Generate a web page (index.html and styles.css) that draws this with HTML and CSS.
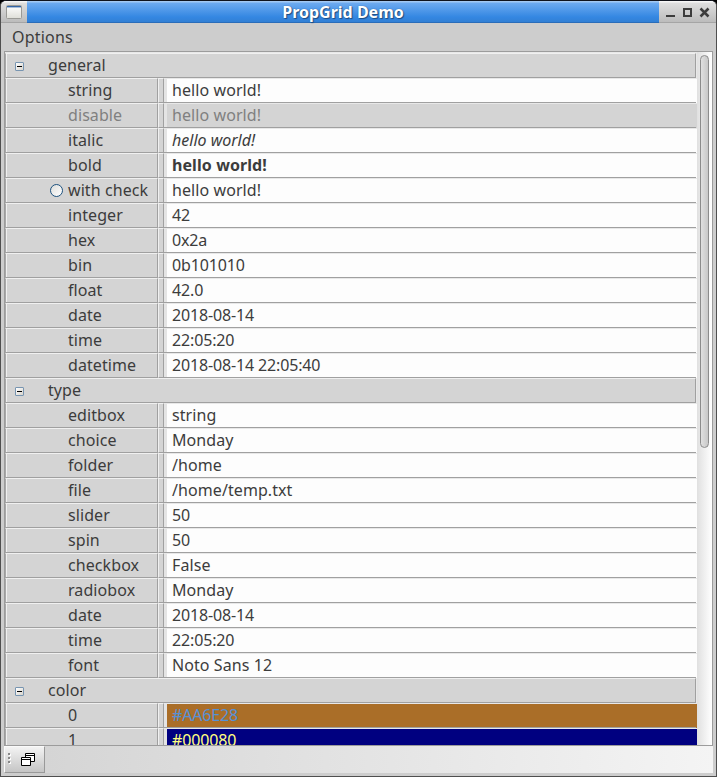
FILE: index.html
```
<!DOCTYPE html>
<html lang="en">
<head>
<meta charset="utf-8">
<title>PropGrid Demo</title>
<link rel="stylesheet" href="styles.css">
</head>
<body>
<div class="window">
  <header class="titlebar">
    <div class="app-button"><svg width="16" height="15" viewBox="0 0 16 15"><defs><linearGradient id="pane" x2="0" y2="1"><stop stop-color="#fff"/><stop offset="1" stop-color="#deded8"/></linearGradient></defs><rect x=".5" y=".5" width="15" height="13" rx="1" fill="url(#pane)" stroke="#9a9a96"/><path d="M1 1.500h14" stroke="#3465a4"/><path d="M1 2.500h14" stroke="#a9bfdb"/></svg></div>
    <h1 class="title">PropGrid Demo</h1>
    <div class="controls"><svg width="58" height="22" viewBox="0 0 58 22" fill="none" stroke="#3c3c3c" stroke-width="2"><path d="M7 15h9"/><path d="M25 8h7v7h-7z"/><path d="M41.500 7.500l8 8M49.500 7.500l-8 8" stroke-width="2.500"/></svg></div>
  </header>
  <nav class="menubar">Options</nav>
  <main class="panel">
    <div class="grid">
      <div class="group"><i class="toggle"></i><span>general</span></div>
      <div class="row"><div class="name">string</div><div class="split"></div><div class="value">hello world!</div></div>
      <div class="row disabled"><div class="name">disable</div><div class="split"></div><div class="value">hello world!</div></div>
      <div class="row"><div class="name">italic</div><div class="split"></div><div class="value italic">hello world!</div></div>
      <div class="row"><div class="name">bold</div><div class="split"></div><div class="value bold">hello world!</div></div>
      <div class="row"><div class="name checkable"><i class="radio"></i>with check</div><div class="split"></div><div class="value">hello world!</div></div>
      <div class="row"><div class="name">integer</div><div class="split"></div><div class="value number">42</div></div>
      <div class="row"><div class="name">hex</div><div class="split"></div><div class="value number">0x2a</div></div>
      <div class="row"><div class="name">bin</div><div class="split"></div><div class="value number">0b101010</div></div>
      <div class="row"><div class="name">float</div><div class="split"></div><div class="value number">42.0</div></div>
      <div class="row"><div class="name">date</div><div class="split"></div><div class="value number">2018-08-14</div></div>
      <div class="row"><div class="name">time</div><div class="split"></div><div class="value number">22:05:20</div></div>
      <div class="row"><div class="name">datetime</div><div class="split"></div><div class="value number">2018-08-14 22:05:40</div></div>
      <div class="group"><i class="toggle"></i><span>type</span></div>
      <div class="row"><div class="name">editbox</div><div class="split"></div><div class="value">string</div></div>
      <div class="row"><div class="name">choice</div><div class="split"></div><div class="value">Monday</div></div>
      <div class="row"><div class="name">folder</div><div class="split"></div><div class="value">/home</div></div>
      <div class="row"><div class="name">file</div><div class="split"></div><div class="value">/home/temp.txt</div></div>
      <div class="row"><div class="name">slider</div><div class="split"></div><div class="value number">50</div></div>
      <div class="row"><div class="name">spin</div><div class="split"></div><div class="value number">50</div></div>
      <div class="row"><div class="name">checkbox</div><div class="split"></div><div class="value">False</div></div>
      <div class="row"><div class="name">radiobox</div><div class="split"></div><div class="value">Monday</div></div>
      <div class="row"><div class="name">date</div><div class="split"></div><div class="value number">2018-08-14</div></div>
      <div class="row"><div class="name">time</div><div class="split"></div><div class="value number">22:05:20</div></div>
      <div class="row"><div class="name">font</div><div class="split"></div><div class="value">Noto Sans 12</div></div>
      <div class="group"><i class="toggle"></i><span>color</span></div>
      <div class="row"><div class="name">0</div><div class="split"></div><div class="value number brown">#AA6E28</div></div>
      <div class="row"><div class="name">1</div><div class="split"></div><div class="value number navy">#000080</div></div>
    </div>
    <div class="scrollbar"><div class="thumb"></div></div>
  </main>
  <footer class="dock">
    <div class="dock-button"><svg width="38" height="25" viewBox="0 0 38 25"><path d="M4 7h2v2H4zM4 11h2v2H4zM4 15h2v2H4z" fill="#fff"/><path d="M3 6h2v2H3zM3 10h2v2H3zM3 14h2v2H3z" fill="#888"/><path d="M20.500 6.500h9v8h-9z" fill="#fff" stroke="#000"/><path d="M20 8.500h10" stroke="#000"/><path d="M16.500 10.500h9v8h-9z" fill="#fff" stroke="#000"/><path d="M16 12.500h10" stroke="#000"/></svg></div>
  </footer>
</div>
</body>
</html>
```
FILE: styles.css
```
* { box-sizing: border-box; }
html { background: #000; }
body {
  margin: 0;
  overflow: hidden;
  font: 16px/24px "Noto Sans", sans-serif;
  letter-spacing: 0.08px;
  color: #3c3c3c;
}
.window {
  display: flex;
  flex-direction: column;
  width: 717px;
  height: 777px;
  padding: 0 3px 3px;
  border: 1px solid #4f4f4f;
  border-top-color: #10131c;
  border-radius: 6px 6px 0 0;
  background: #cdcdcd;
  overflow: hidden;
}
.titlebar {
  display: flex;
  flex: none;
  height: 22px;
  margin: 0 -3px;
  background: linear-gradient(#f6f6f6 1px, #dedede 2px, #bcbcbc 21px, #a5a5a5 21px);
}
.app-button { width: 26px; padding: 4px 0 0 5px; }
.app-button svg { display: block; }
.title {
  flex: 1;
  margin: 0;
  font-size: 16px;
  line-height: 22px;
  letter-spacing: 0;
  text-align: center;
  color: #fff;
  text-shadow: 1px 1px 1px #1d4b80, 0 0 1px #1d4b80;
  background: linear-gradient(#a3c9f3 1px, #6daaf0 2px, #3487e2 16px, #3280d5 21px, #2a6db9 21px);
}
.controls { width: 57px; }
.controls svg { display: block; }
.menubar { flex: none; height: 28px; padding: 2px 8px; letter-spacing: 0.2px; }
.panel {
  display: flex;
  flex: none;
  width: 709px;
  height: 695px;
  border: 1px solid #9c9c9c;
  overflow: hidden;
}
.grid { flex: 1; padding-top: 1px; background: #e8e8e8; }
.group {
  display: flex;
  width: 691px;
  height: 25px;
  padding-left: 9px;
  border: 1px solid;
  border-color: #f0f0f0 #a0a0a0 #a0a0a0 #f0f0f0;
  line-height: 23px;
  background: #d4d4d4;
}
.group, .name { box-shadow: inset 1px 0 #f0f0f0; border-left-color: #a8a8a8; }
.toggle {
  width: 9px;
  height: 9px;
  margin: 8px 24px 0 0;
  border: 1px solid #7895b1;
  border-radius: 1px;
  background: linear-gradient(#000, #000) center / 5px 1px no-repeat, linear-gradient(135deg, #fff, #d8d4cc);
}
.row { display: flex; height: 25px; }
.name, .split {
  border: 1px solid;
  border-color: #f0f0f0 #a0a0a0 #a0a0a0 #f0f0f0;
  background: #d4d4d4;
}
.name {
  width: 153px;
  padding-left: 62px;
  border-left-color: #a8a8a8;
  line-height: 23px;
  white-space: nowrap;
}
.split { width: 6px; }
.value {
  flex: 1;
  padding-left: 8px;
  line-height: 25px;
  background:
    linear-gradient(#a0a0a0, #a0a0a0) 0 24px / 532px 1px no-repeat,
    linear-gradient(#e8e8e8, #e8e8e8) 0 0 / 100% 1px no-repeat,
    linear-gradient(#e4e4e4, #e4e4e4) 0 0 / 3px 100% no-repeat,
    #fdfdfd;
}
.number { letter-spacing: -0.15px; }
.disabled { color: #808080; }
.disabled .value { background-color: #d4d4d4; }
.italic { font-style: italic; letter-spacing: 0; }
.bold { font-weight: 700; }
.checkable { display: flex; padding-left: 44px; }
.radio {
  width: 13px;
  height: 13px;
  margin: 5px 5px 0 0;
  border: 1px solid #1d527f;
  border-radius: 50%;
  background: linear-gradient(135deg, #dededb, #fff);
}
.brown { background-color: #aa6e28; color: #5591d7; }
.navy { background-color: #000080; color: #ffff7f; }
.scrollbar {
  width: 15px;
  padding: 3px 3px 0;
  background: linear-gradient(90deg, #e0e0e0, #fff);
}
.thumb {
  width: 9px;
  height: 393px;
  border: 1px solid #8c8c8c;
  border-radius: 5px;
  background: linear-gradient(90deg, #e0e0e0, #c8c8c8);
}
.dock { flex: 1; background: linear-gradient(90deg, #d3d3d3, #f4f4f4); }
.dock-button {
  width: 41px;
  height: 27px;
  border: 1px solid;
  border-color: #fafafa #999 #999 #fafafa;
  background: linear-gradient(#f3f3f3, #c5c5c5);
}
.dock-button svg { display: block; }
```
